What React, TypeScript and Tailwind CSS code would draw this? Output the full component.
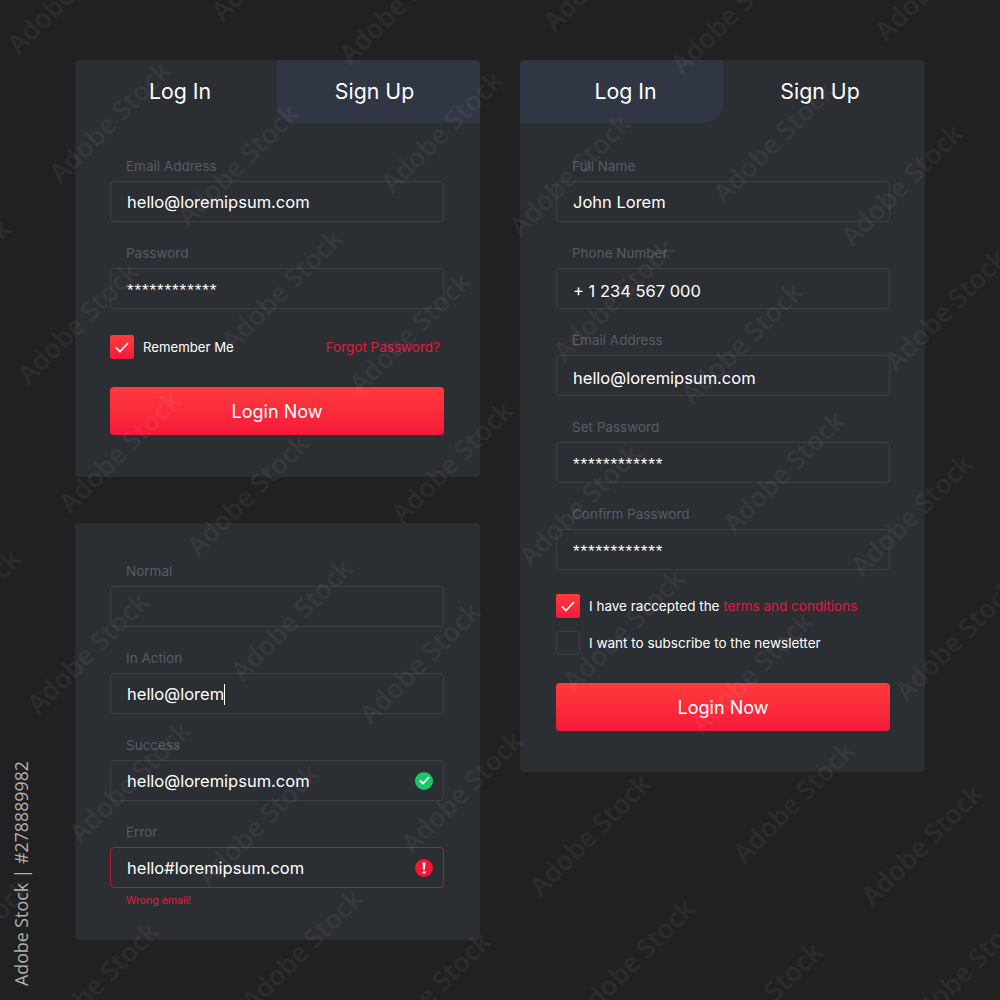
import { ReactNode } from "react";

const rowStarts = [
  [-60, -50],
  [110, 122],
  [-50, 280],
  [120, 452],
  [-40, 610],
  [130, 782],
  [-30, 940],
];

const marks: { x: number; y: number }[] = [];
rowStarts.forEach(([x, y]) => {
  [-1, 0, 1, 2, 3].forEach((k) => {
    marks.push({ x: x + 332 * k, y: y + 10 * k });
    marks.push({ x: x + 332 * k + 128, y: y + 10 * k + 43 });
  });
});

function CheckBox({ checked }: { checked?: boolean }) {
  if (!checked) {
    return <span className="h-6 w-6 shrink-0 rounded-[2px] border border-[#3a3e46]" />;
  }
  return (
    <span className="flex h-6 w-6 shrink-0 items-center justify-center rounded-[2px] bg-gradient-to-b from-[#ff3a3c] to-[#f5173a]">
      <svg width="14" height="11" viewBox="0 0 14 11" fill="none">
        <path d="M1 5.5 L5 9.5 L13 1" stroke="#fff" strokeWidth="1.7" />
      </svg>
    </span>
  );
}

function Field({
  label,
  value,
  tone = "normal",
  caret,
  icon,
  stars,
  low,
}: {
  label: string;
  value?: string;
  tone?: "normal" | "error";
  caret?: boolean;
  icon?: ReactNode;
  stars?: boolean;
  low?: boolean;
}) {
  return (
    <div>
      <div className="mb-[5px] pl-4 text-[13.5px] leading-5 text-[#565c67]">{label}</div>
      <div
        className={`flex h-[41px] items-center justify-between rounded-[4px] border pl-4 pr-[10px] text-[16.5px] text-white ${
          tone === "error" ? "border-[#b81a36]" : "border-[#3a3e46]"
        }`}
      >
        <span className={`flex items-center ${low ? "pt-[5px]" : "pt-[2px]"}`}>
          <span
            className={
              stars ? "pt-[3px] font-['Liberation_Sans',sans-serif] text-[17px] leading-5 tracking-[0.9px]" : ""
            }
          >
            {value}
          </span>
          {caret && <span className="h-[21px] w-px bg-white" />}
        </span>
        {icon}
      </div>
    </div>
  );
}

function Tabs({ active }: { active: "login" | "signup" }) {
  return (
    <div className="flex h-[63px] text-[21.3px] text-white">
      <div
        className={`flex items-center justify-center rounded-tl-[4px] pl-2 ${
          active === "login" ? "w-[203px] rounded-br-[20px] bg-[#303644]" : "w-[202px]"
        }`}
      >
        Log In
      </div>
      <div
        className={`flex flex-1 items-center justify-center rounded-tr-[4px] pr-2 ${
          active === "signup" ? "rounded-bl-[16px] bg-[#303644]" : ""
        }`}
      >
        Sign Up
      </div>
    </div>
  );
}

function LoginButton() {
  return (
    <div className="flex h-12 items-center justify-center rounded-[4px] bg-gradient-to-b from-[#ff3a3c] to-[#f5173a] text-[18px] text-white">
      Login Now
    </div>
  );
}

export default function App() {
  return (
    <div className="relative h-[1000px] w-[1000px] overflow-hidden bg-[#212121] font-['Inter',sans-serif]">
      <div className="flex gap-10 pl-[75px] pt-[60px]">
        <div className="flex w-[405px] flex-col gap-[46px]">
          <section className="rounded-[4px] bg-[#2b2e33] pb-[42px]">
            <Tabs active="signup" />
            <div className="flex flex-col gap-[21px] pl-[35px] pr-9 pt-[33px]">
              <Field label="Email Address" value="hello@loremipsum.com" />
              <Field label="Password" value="************" stars />
            </div>
            <div className="mt-[26px] flex items-center justify-between pl-[35px] pr-10 text-[13.5px]">
              <div className="flex items-center gap-[9px] text-[13.2px] text-white">
                <CheckBox checked />
                <span className="pt-px">Remember Me</span>
              </div>
              <span className="text-[#e6183c]">Forgot Password?</span>
            </div>
            <div className="mt-[28px] pl-[35px] pr-9">
              <LoginButton />
            </div>
          </section>

          <section className="flex flex-col gap-[21px] rounded-[4px] bg-[#2b2e33] pb-[29px] pl-[35px] pr-9 pt-[38px]">
            <Field label="Normal" />
            <Field label="In Action" value="hello@lorem" caret />
            <Field
              label="Success"
              value="hello@loremipsum.com"
              icon={
                <span className="flex h-[18px] w-[18px] items-center justify-center rounded-full bg-[#19c76b]">
                  <svg width="11" height="9" viewBox="0 0 11 9" fill="none">
                    <path d="M1 4.5 L4 7.5 L10 1.2" stroke="#fff" strokeWidth="1.8" />
                  </svg>
                </span>
              }
            />
            <div>
              <Field
                label="Error"
                value="hello#loremipsum.com"
                tone="error"
                icon={
                  <span className="flex h-[18px] w-[18px] items-center justify-center rounded-full bg-[#f5173a]">
                    <svg width="4" height="12" viewBox="0 0 4 12" fill="#fff">
                      <path d="M0.6 0.5 H3.4 L3 7.6 H1 Z" />
                      <circle cx="2" cy="10.3" r="1.4" />
                    </svg>
                  </span>
                }
              />
              <div className="mt-[3px] pl-4 text-[10.5px] leading-5 text-[#e6183c]">Wrong email!</div>
            </div>
          </section>
        </div>

        <section className="h-fit w-[405px] rounded-[4px] bg-[#2b2e33] pb-[41px]">
          <Tabs active="login" />
          <div className="flex flex-col gap-[21px] pl-9 pr-[35px] pt-[33px]">
            <Field label="Full Name" value="John Lorem" />
            <Field label="Phone Number" value="+ 1 234 567 000" low />
            <Field label="Email Address" value="hello@loremipsum.com" low />
            <Field label="Set Password" value="************" stars />
            <Field label="Confirm Password" value="************" stars />
          </div>
          <div className="mt-6 flex flex-col gap-[13px] pl-9 pr-[35px] text-[13.5px] text-white">
            <div className="flex items-center gap-[9px]">
              <CheckBox checked />
              <span>
                I have raccepted the <span className="text-[#e6183c]">terms and conditions</span>
              </span>
            </div>
            <div className="flex items-center gap-[9px]">
              <CheckBox />
              I want to subscribe to the newsletter
            </div>
          </div>
          <div className="mt-7 pl-9 pr-[35px]">
            <LoginButton />
          </div>
        </section>
      </div>

      {/* stock watermark on top of everything */}
      {marks.map((m) => (
        <span
          key={`${m.x}-${m.y}`}
          className="pointer-events-none absolute -translate-x-1/2 -translate-y-1/2 -rotate-45 whitespace-nowrap font-['Open_Sans',sans-serif] text-[26.5px] font-semibold text-white/[0.05]"
          style={{ left: m.x, top: m.y }}
        >
          Adobe Stock
        </span>
      ))}

      <div className="absolute bottom-[14px] left-[11px] rotate-180 whitespace-nowrap font-['Open_Sans',sans-serif] text-[17.8px] leading-5 text-[#b0b0b0] [writing-mode:vertical-rl]">
        Adobe Stock | #278889982
      </div>
    </div>
  );
}
